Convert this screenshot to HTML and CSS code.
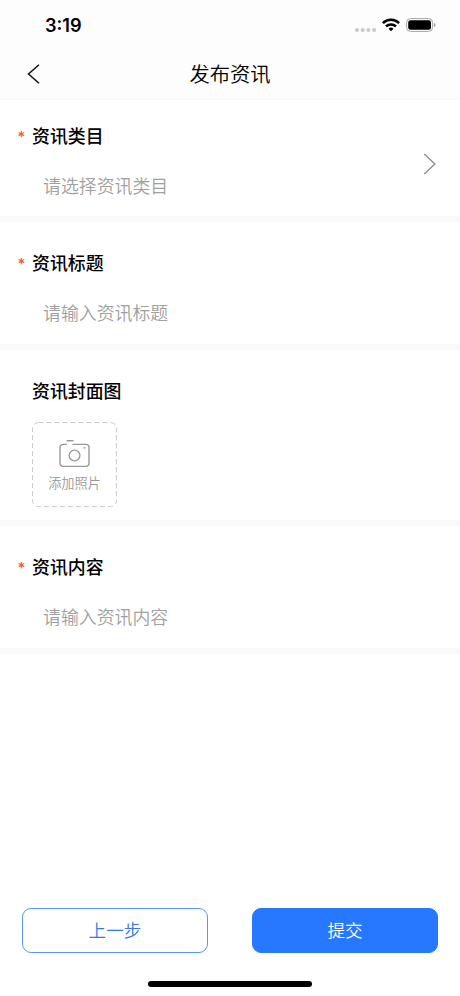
FILE: index.html
```html
<!DOCTYPE html>
<html lang="zh-CN">
<head>
<meta charset="utf-8">
<title>发布资讯</title>
<link rel="stylesheet" href="styles.css">
</head>
<body>
<div class="screen">
  <div class="status">
    <span class="time">3:19</span>
    <div class="indicators">
      <svg class="dots" width="22" height="4" viewBox="0 0 22 4" fill="#c9c9c9"><circle cx="2" cy="2" r="2"/><circle cx="7.700" cy="2" r="2"/><circle cx="13.400" cy="2" r="2"/><circle cx="19.100" cy="2" r="2"/></svg>
      <svg class="wifi" width="18" height="14" viewBox="0 0 18 14" fill="none" stroke="#000" stroke-width="2.500"><path d="M.9 5.100a11.600 11.600 0 0 1 16.200 0"/><path d="M4 8.400a7.200 7.200 0 0 1 10 0"/><path d="M9 13.200 6.500 10.700a3.600 3.600 0 0 1 5 0Z" fill="#000" stroke="none"/></svg>
      <svg class="battery" width="30" height="14" viewBox="0 0 30 14"><rect x=".6" y=".6" width="26" height="12.800" rx="4" fill="none" stroke="#a5a5a5"/><rect x="2.200" y="2.200" width="22.800" height="9.600" rx="2.400"/><path d="M28 5c2 .7 2 3.300 0 4Z" fill="#999"/></svg>
    </div>
  </div>
  <header class="nav">
    <svg class="back" width="14" height="20" viewBox="0 0 14 20" fill="none" stroke="#111" stroke-width="1.500"><path d="M12 .8 1.500 10 12 19.200"/></svg>
    <h1>发布资讯</h1>
  </header>
  <main>
    <section class="field first">
      <div class="label"><span class="star">*</span>资讯类目</div>
      <div class="hint">请选择资讯类目</div>
      <svg class="arrow" width="14" height="22" viewBox="0 0 14 22" fill="none" stroke="#929292" stroke-width="1.500"><path d="M1.300 1 11.800 11 1.300 21"/></svg>
    </section>
    <section class="field">
      <div class="label"><span class="star">*</span>资讯标题</div>
      <div class="hint">请输入资讯标题</div>
    </section>
    <section class="field cover">
      <div class="label">资讯封面图</div>
      <div class="upload">
        <svg class="frame" width="85" height="85" viewBox="0 0 85 85" fill="none" stroke="#cbcbcb"><rect x=".5" y=".5" width="84" height="84" rx="6" stroke-dasharray="5 3"/></svg>
        <svg class="camera" width="32" height="28" viewBox="0 0 32 28" fill="none" stroke="#999" stroke-width="1.400"><path d="M7.500 .8h7M8 4.400H4a3 3 0 0 0-3 3v16a3 3 0 0 0 3 3h23a3 3 0 0 0 3-3v-16a3 3 0 0 0-3-3H13.500"/><circle cx="15.500" cy="15.500" r="5.400"/><path d="M24.500 7.900h2"/></svg>
        <span>添加照片</span>
      </div>
    </section>
    <section class="field">
      <div class="label"><span class="star">*</span>资讯内容</div>
      <div class="hint">请输入资讯内容</div>
    </section>
  </main>
  <footer>
    <div class="actions">
      <button class="prev">上一步</button>
      <button class="submit">提交</button>
    </div>
    <div class="home"></div>
  </footer>
</div>
</body>
</html>
```
FILE: styles.css
```css
* { box-sizing: border-box; }
body {
  margin: 0;
  background: #fff;
  color: #000;
  font-family: "Noto Sans CJK SC", sans-serif;
}
svg { display: block; }
.screen {
  width: 460px;
  height: 996px;
  display: flex;
  flex-direction: column;
  overflow: hidden;
}
.status {
  height: 50px;
  flex: none;
  display: flex;
  justify-content: space-between;
  align-items: center;
  padding: 0 24px 0 45px;
  background: #fdfdfd;
}
.time {
  font: 600 18.2px/24px Inter, sans-serif;
}
.indicators { display: flex; align-items: center; }
.dots { margin: 9px 5px 0 0; }
.wifi { margin-right: 6px; }
.nav {
  position: relative;
  height: 50px;
  flex: none;
  display: flex;
  align-items: center;
  justify-content: center;
  padding-bottom: 2px;
  background: #fdfdfd;
  border-bottom: 2px solid #fafafa;
}
.back { position: absolute; left: 27px; top: 14px; }
h1 {
  margin: 0;
  font-size: 20.3px;
  font-weight: 350;
  line-height: 30px;
}
.field {
  position: relative;
  height: 128px;
  padding: 27px 32px 0;
  border-bottom: 6px solid #fafafa;
}
.first { height: 122px; padding-top: 22px; }
.cover { height: 176px; }
.label {
  position: relative;
  font-size: 17.9px;
  font-weight: 500;
  line-height: 26px;
}
.star {
  position: absolute;
  left: -14.5px;
  top: 2px;
  color: #f4543c;
  font-family: Inter, sans-serif;
  font-size: 15px;
  font-weight: 500;
}
.hint {
  margin: 24px 0 0 11px;
  color: #a0a0a0;
  font-size: 17.9px;
  font-weight: 350;
  line-height: 26px;
}
.arrow { position: absolute; right: 23px; top: 53px; }
.upload {
  position: relative;
  width: 85px;
  height: 85px;
  margin-top: 19px;
  display: flex;
  flex-direction: column;
  align-items: center;
  padding-top: 18px;
}
.frame { position: absolute; inset: 0; }
.upload span {
  margin-top: 5px;
  color: #999;
  font-size: 13.2px;
  font-weight: 350;
  line-height: 20px;
}
footer { margin-top: auto; }
.actions {
  display: flex;
  justify-content: space-between;
  padding: 0 22px;
}
button {
  width: 186px;
  height: 45px;
  padding: 0 0 2px;
  border: 1px solid #5b94f8;
  border-radius: 9px;
  font-family: inherit;
  font-size: 17.6px;
  font-weight: 350;
  line-height: 26px;
}
.prev { background: #fff; color: #3479e9; }
.submit { background: #2878ff; border-color: #2878ff; color: #fff; }
.home {
  width: 164px;
  height: 6px;
  margin: 28px auto 9px;
  border-radius: 3px;
  background: #000;
}
```
